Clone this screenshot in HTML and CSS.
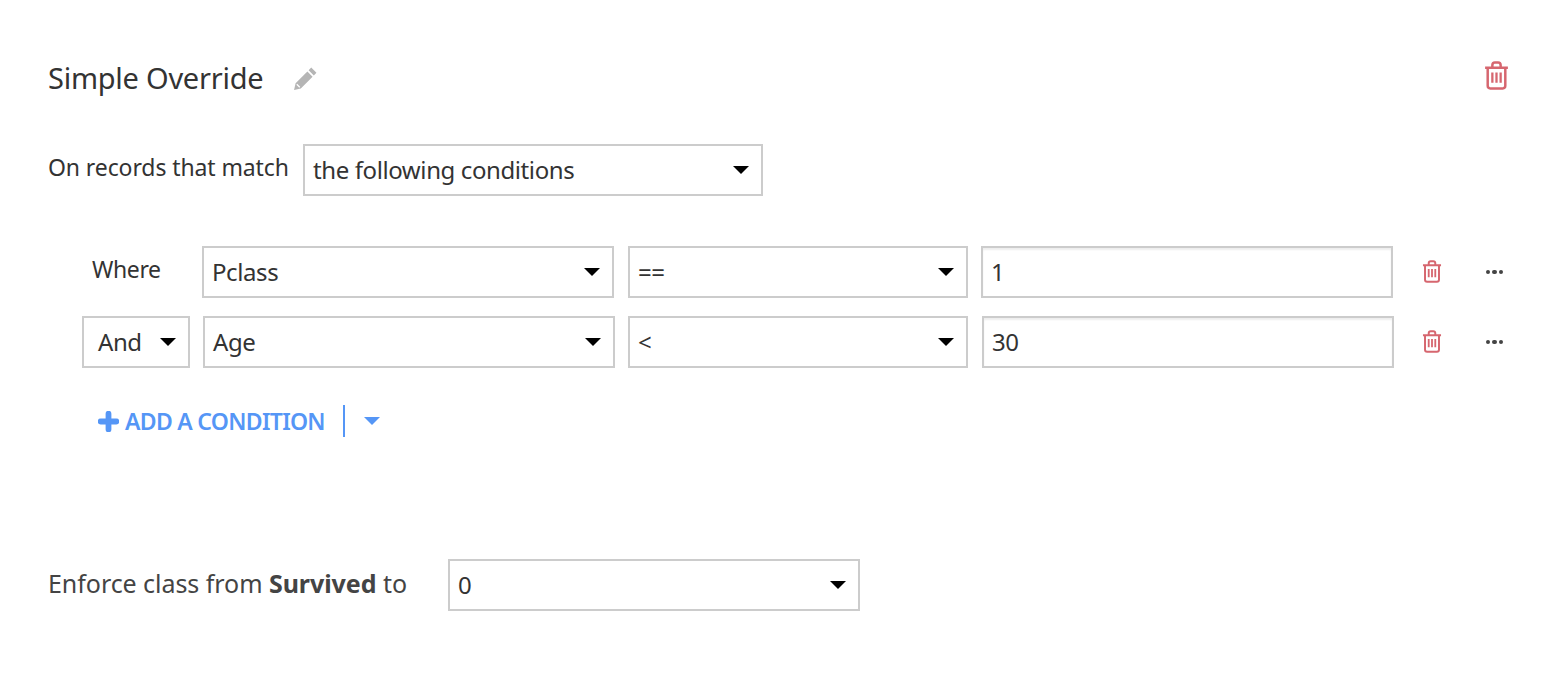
FILE: index.html
```html
<!DOCTYPE html>
<html lang="en">
<head>
  <meta charset="UTF-8">
  <title>Simple Override</title>
  <link rel="stylesheet" href="styles.css">
</head>
<body>
  <svg class="defs" width="0" height="0">
    <symbol id="trash" viewBox="0 0 24 28">
      <path d="M1 6.500h22M8 6V4a2.500 2.500 0 0 1 2.500-2.500h3A2.500 2.500 0 0 1 16 4v2M3.500 7v17a2.500 2.500 0 0 0 2.500 2.500h12a2.500 2.500 0 0 0 2.500-2.500V7" fill="none" stroke="currentColor" stroke-width="2.400"/>
      <path d="M8 11v10M12 11v10M16 11v10" fill="none" stroke="currentColor" stroke-width="2.200"/>
    </symbol>
  </svg>

  <div class="override">
    <div class="title-row">
      <h1 class="title">Simple Override</h1>
      <svg class="pencil" viewBox="0 0 24 24" width="25" height="25">
        <path d="M17.500 1.500 22.500 6.500 20 9 15 4zM13.800 5.200 18.800 10.200 7.500 21.500 1 23 2.500 16.500z" fill="currentColor"/>
        <path d="M3.600 17.500 6.500 20.400" fill="none" stroke="#fff" stroke-width="1.200"/>
      </svg>
      <svg class="trash trash-big" width="25" height="29"><use href="#trash"/></svg>
    </div>

    <div class="match-row">
      <span class="label">On records that match</span>
      <div class="select select-match">the following conditions</div>
    </div>

    <div class="conditions">
      <div class="cond">
        <span class="where">Where</span>
        <div class="select select-col">Pclass</div>
        <div class="select select-op">==</div>
        <div class="input">1</div>
        <svg class="trash" width="20" height="23"><use href="#trash"/></svg>
        <span class="dots"><i></i><i></i><i></i></span>
      </div>
      <div class="cond cond-and">
        <div class="select select-and">And</div>
        <div class="select select-col">Age</div>
        <div class="select select-op">&lt;</div>
        <div class="input">30</div>
        <svg class="trash" width="20" height="23"><use href="#trash"/></svg>
        <span class="dots"><i></i><i></i><i></i></span>
      </div>
    </div>

    <div class="add-row">
      <svg class="plus" viewBox="0 0 20 20" width="21" height="21">
        <path d="M10 2.500v15M2.500 10h15" fill="none" stroke="currentColor" stroke-width="5.500" stroke-linecap="round"/>
      </svg>
      <span class="add-text">ADD A CONDITION</span>
      <span class="add-sep"></span>
      <span class="add-caret"></span>
    </div>

    <div class="enforce-row">
      <span class="enforce-label">Enforce class from <b>Survived</b> to</span>
      <div class="select select-class">0</div>
    </div>
  </div>
</body>
</html>
```

FILE: styles.css
```css
body {
  margin: 0;
  background: #fff;
  color: #333;
  font-family: "Noto Sans", sans-serif;
  overflow: hidden;
}
.defs {
  display: block;
}
.override {
  padding: 60px 57px 0 48px;
}
.title-row {
  display: flex;
  align-items: center;
  height: 36px;
}
.title {
  margin: 0;
  font-size: 29px;
  font-weight: 400;
  letter-spacing: -0.25px;
  color: #333;
  position: relative;
  top: -1px;
}
.pencil {
  margin-left: 30px;
  color: #b5b5b5;
}
.trash {
  color: #d6666f;
  flex: none;
}
.trash-big {
  margin-left: auto;
  margin-top: -6px;
}
.match-row {
  display: flex;
  align-items: center;
  margin-top: 48px;
}
.label {
  width: 255px;
  font-size: 23px;
  letter-spacing: -0.1px;
  margin-top: -7px;
  color: #333;
  white-space: nowrap;
}
.select, .input {
  box-sizing: border-box;
  height: 52px;
  border: 2px solid #ccc;
  padding: 0 8px;
  font-size: 24px;
  letter-spacing: -0.4px;
  line-height: 48px;
  color: #333;
  background: #fff;
  position: relative;
  flex: none;
}
.select::after {
  content: "";
  position: absolute;
  right: 12px;
  top: 20px;
  border-top: 8px solid #000;
  border-left: 8px solid transparent;
  border-right: 8px solid transparent;
}
.select-match {
  width: 460px;
}
.conditions {
  margin-top: 50px;
  padding-left: 34px;
}
.cond {
  display: flex;
  align-items: center;
  height: 52px;
}
.cond-and {
  margin-top: 18px;
}
.where {
  width: 120px;
  box-sizing: border-box;
  padding-left: 10px;
  font-size: 23px;
  letter-spacing: -0.4px;
  margin-top: -7px;
}
.select-and {
  width: 108px;
  margin-right: 13px;
  padding-left: 14px;
}
.select-col {
  width: 412px;
}
.select-op {
  width: 340px;
  margin-left: 14px;
}
.cond-and .select-op {
  margin-left: 13px;
}
.input {
  width: 412px;
  margin-left: 13px;
  box-shadow: inset 0 2px 2px rgba(0, 0, 0, 0.07);
}
.cond-and .input {
  margin-left: 14px;
}
.cond .trash {
  margin-left: 29px;
  margin-top: -1px;
}
.cond-and .trash {
  margin-left: 28px;
}
.dots {
  display: flex;
  gap: 2px;
  margin-left: 43.500px;
}
.dots i {
  width: 4.500px;
  height: 4.500px;
  border-radius: 50%;
  background: #444;
}
.add-row {
  display: flex;
  align-items: center;
  height: 32px;
  margin-top: 37px;
  margin-left: 50px;
  color: #5596f6;
}
.add-text {
  margin-left: 6px;
  font-size: 23px;
  font-weight: 600;
  letter-spacing: -0.7px;
  white-space: nowrap;
}
.add-sep {
  width: 2px;
  height: 32px;
  background: #5596f6;
  margin-left: 18px;
}
.add-caret {
  margin-left: 19px;
  border-top: 8px solid #5596f6;
  border-left: 8px solid transparent;
  border-right: 8px solid transparent;
}
.enforce-row {
  display: flex;
  align-items: center;
  margin-top: 122px;
}
.enforce-label {
  width: 400px;
  font-size: 25px;
  letter-spacing: -0.05px;
  margin-top: -5px;
  color: #444;
  white-space: nowrap;
}
.select-class {
  width: 412px;
}
```
